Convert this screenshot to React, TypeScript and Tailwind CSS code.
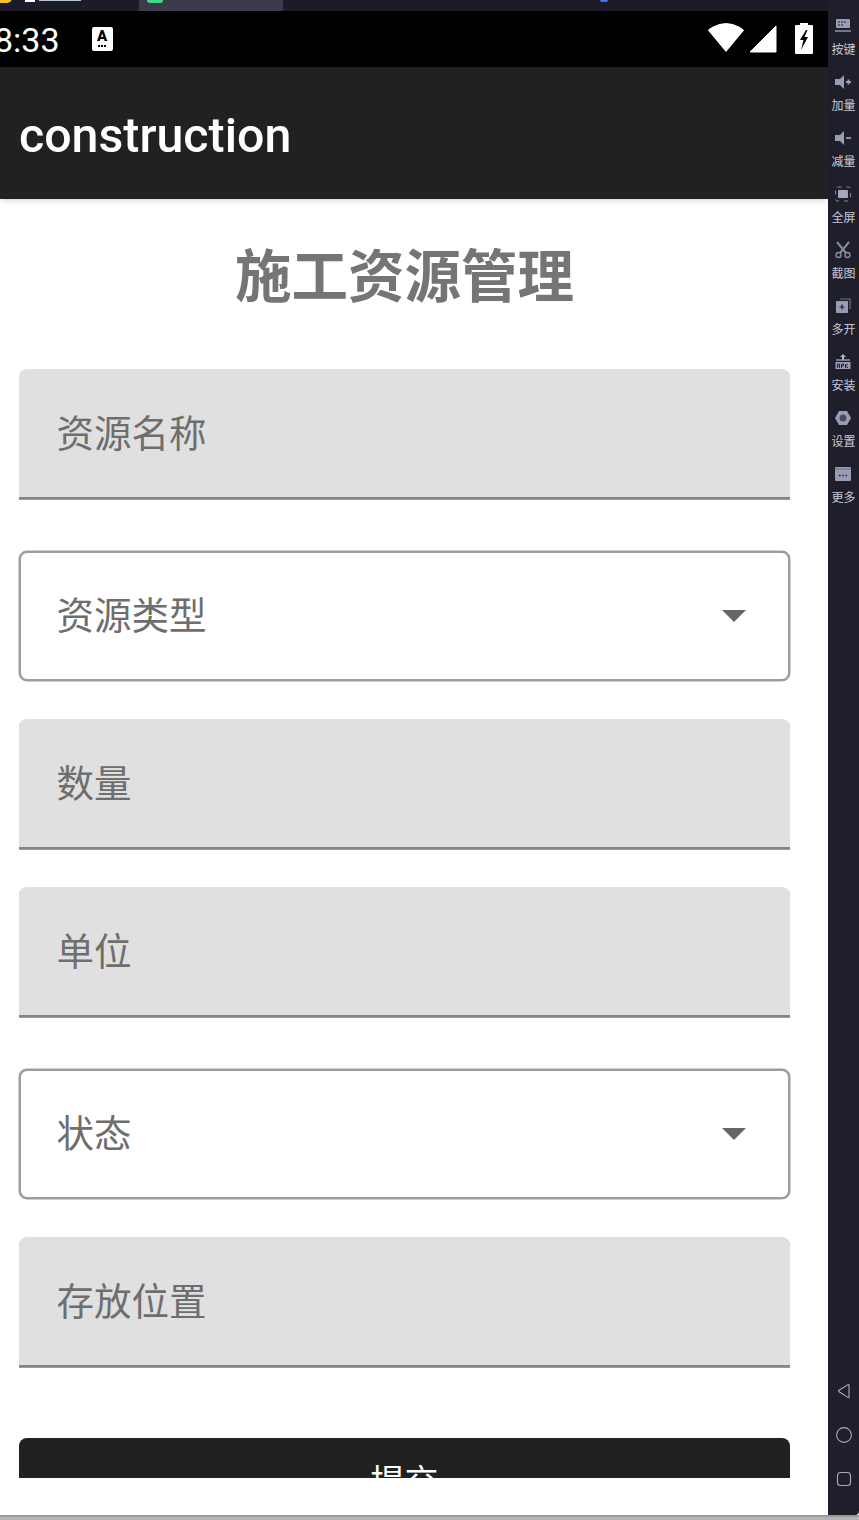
const cjk = "font-['Roboto','Noto_Sans_CJK_SC',sans-serif]"

function TextField({ label }: { label: string }) {
  return (
    <div className="flex h-[130px] items-center rounded-t-[8px] border-b-2 border-[#858585] bg-[#e0e0e0] pl-[37.5px] shadow-[0_1px_0_#9a9a9a]">
      <span className="mt-[4px] text-[37.5px] leading-none text-[#6e6e6e]">{label}</span>
    </div>
  )
}

function SelectField({ label }: { label: string }) {
  return (
    <div className="mt-[14px] flex h-[130px] items-center justify-between rounded-[8px] border-2 border-[#9e9e9e] bg-white pl-[35.5px] pr-[42px] ring-[0.5px] ring-[#9e9e9e]">
      <span className="mt-[2px] text-[37.5px] leading-none text-[#6e6e6e]">{label}</span>
      <div className="h-0 w-0 border-x-[12px] border-t-[12px] border-x-transparent border-t-[#666666]" />
    </div>
  )
}

function StatusBar() {
  return (
    <div className="flex h-[56px] items-center bg-black pr-[15px] text-white">
      <span className="-ml-[6px] mt-[1px] font-['Roboto',sans-serif] text-[34px] leading-none">8:33</span>
      <div className="ml-[32px] flex h-[24px] w-[21px] flex-col items-center rounded-[2px] bg-white text-black">
        <span className="font-['Roboto',sans-serif] text-[15px] font-black leading-[18px]">A</span>
        <div className="flex gap-[1px]">
          <i className="h-[2px] w-[2px] bg-black" />
          <i className="h-[2px] w-[2px] bg-black" />
          <i className="h-[2px] w-[2px] bg-black" />
        </div>
      </div>
      <div className="ml-auto flex items-center">
        <svg width="38" height="31" viewBox="0 0 36 30" className="-mt-[3px] -ml-[1px]">
          <path d="M18 29 L0.5 8 Q2 6 5 4.5 Q18 -2.5 31 4.5 Q34 6 35.5 8 Z" fill="#fff" />
        </svg>
        <svg width="28" height="28" viewBox="0 0 28 28" className="ml-[4px]">
          <path d="M27 1 V27 H1 Z" fill="#fff" stroke="#fff" strokeLinejoin="round" />
        </svg>
        <svg width="18" height="31" viewBox="0 0 18 31" className="ml-[18px] -mt-[1px]">
          <path d="M5 0 H13 V2 H17 Q18 2 18 3 V30 Q18 31 17 31 H1 Q0 31 0 30 V3 Q0 2 1 2 H5 Z" fill="#fff" />
          <path d="M11 7 L5 17 H8.5 L6 27 L13 14 H9.5 L12.5 7 Z" fill="#000" />
        </svg>
      </div>
    </div>
  )
}

const toolIcons = [
  <g key="k">
    <rect x="2" y="2" width="14" height="9" rx="1" fill="#9b9bb5" />
    <path d="M4 5h2M7 5h2M10 5h2M4 8h2M7 8h2" stroke="#1f1f2b" strokeWidth="1.2" />
    <path d="M1 14h16" stroke="#9b9bb5" strokeWidth="1.4" />
  </g>,
  <g key="p">
    <path d="M1 6h5l4-4v14l-4-4H1z" fill="#9b9bb5" />
    <path d="M12 9h5M14.5 6.5v5" stroke="#9b9bb5" strokeWidth="1.8" />
  </g>,
  <g key="m">
    <path d="M1 6h5l4-4v14l-4-4H1z" fill="#9b9bb5" />
    <path d="M12 9h5" stroke="#9b9bb5" strokeWidth="1.8" />
  </g>,
  <g key="f">
    <rect x="1.5" y="2" width="15" height="14" rx="2" fill="none" stroke="#8a8aa3" strokeDasharray="4 5" />
    <rect x="4" y="5" width="10" height="8" rx="1" fill="#a5a5bd" />
  </g>,
  <g key="c">
    <path d="M3 1l9 11M15 1L6 12" stroke="#8a8aa3" strokeWidth="2" />
    <circle cx="4.5" cy="14" r="2.5" fill="none" stroke="#8a8aa3" strokeWidth="1.4" />
    <circle cx="13.5" cy="14" r="2.5" fill="none" stroke="#8a8aa3" strokeWidth="1.4" />
  </g>,
  <g key="o">
    <path d="M6 2h10v10" fill="none" stroke="#6f6f88" strokeWidth="1.2" />
    <rect x="2" y="4" width="12" height="12" rx="1" fill="#9b9bb5" />
    <path d="M5.5 10h5M8 7.5v5" stroke="#1f1f2b" strokeWidth="1.2" />
  </g>,
  <g key="a">
    <path d="M9 1l3 3h-2v3H8V4H6z" fill="#b5b5c8" />
    <path d="M2 7h14" stroke="#9b9bb5" strokeWidth="1.4" />
    <rect x="1.5" y="9" width="15" height="7" fill="#9b9bb5" />
    <path d="M3.5 15v-4h2v4M3.5 13h2M7.5 15v-4h2v2h-2M11.5 15v-4M14 11l-2.5 2 2.5 2" fill="none" stroke="#1f1f2b" strokeWidth="0.9" />
  </g>,
  <g key="s">
    <path d="M5 2h8l4 7-4 7H5L1 9z" fill="#9b9bb5" />
    <circle cx="9" cy="9" r="3.5" fill="#4a4a5c" />
  </g>,
  <g key="d">
    <rect x="1" y="2" width="16" height="14" rx="1" fill="#9b9bb5" />
    <path d="M1 4h16" stroke="#6f6f88" />
    <path d="M5 10.5h1.5M8.3 10.5h1.5M11.6 10.5h1.5" stroke="#1f1f2b" strokeWidth="1.6" />
  </g>,
]

const tools = ['按键', '加量', '减量', '全屏', '截图', '多开', '安装', '设置', '更多']

function SideBar() {
  return (
    <aside className="-mt-[11px] flex w-[31px] flex-col items-center rounded-br-[4px] bg-[#1f1f2b] pb-[28px] pt-[11px]">
      {tools.map((name, i) => (
        <div key={name} className="flex h-[56px] flex-col items-center">
          <svg width="18" height="18" viewBox="0 0 18 18" className="mt-[6px]">{toolIcons[i]}</svg>
          <span className="mt-[7px] text-[12px] leading-[16px] whitespace-nowrap text-[#c9c9d6]">{name}</span>
        </div>
      ))}
      <div className="mt-auto flex flex-col items-center gap-[28px]">
        <svg width="16" height="16" viewBox="0 0 16 16" fill="none" stroke="#a9a9bd" strokeWidth="1.1">
          <path d="M13 2 V14 Q13 15 12 14.4 L3 8.8 Q2 8 3 7.2 L12 1.6 Q13 1 13 2 Z" />
        </svg>
        <svg width="16" height="16" viewBox="0 0 16 16" fill="none" stroke="#a9a9bd" strokeWidth="1.1">
          <circle cx="8" cy="8" r="7.4" />
        </svg>
        <svg width="16" height="16" viewBox="0 0 16 16" fill="none" stroke="#a9a9bd" strokeWidth="1.1">
          <rect x="1.5" y="1.5" width="13" height="13" rx="3" />
        </svg>
      </div>
    </aside>
  )
}

export default function App() {
  return (
    <div className={`flex h-[1520px] w-[859px] flex-col overflow-hidden bg-white ${cjk}`}>
      {/* emulator window tabs */}
      <div className="flex h-[11px] shrink-0 bg-[#1f1f2b]">
        <div className="flex w-[139px] items-start gap-[4px] overflow-hidden rounded-br-[6px] bg-[#1c1c28]">
          <div className="-mt-[7px] ml-[-4px] h-[10px] w-[16px] shrink-0 rounded-full bg-[#f5c518]" />
          <div className="ml-[9px] h-[2px] w-[10px] bg-white" />
          <div className="h-[1px] w-[42px] bg-[#b9c4dc]" />
        </div>
        <div className="w-[144px] bg-[#3b3b4b] pl-[8px]">
          <div className="h-[3px] w-[16px] rounded-b-[3px] bg-[#3ddc84]" />
        </div>
        <div className="flex-1 rounded-bl-[6px] bg-[#1c1c28] pl-[317px]">
          <div className="h-[2px] w-[8px] rounded-b-[2px] bg-[#4f6df5]" />
        </div>
      </div>

      <div className="flex h-[1504px] shrink-0">
        <main className="flex w-[828px] flex-col bg-white">
          <StatusBar />
          <header className="relative z-10 flex h-[132px] shrink-0 items-center bg-[#212121] pl-[19px] shadow-md">
            <h1 className="mt-[6px] font-['Roboto',sans-serif] text-[48.3px] font-medium leading-none text-white">construction</h1>
          </header>

          <div className="h-[1279px] overflow-hidden pl-[19px] pr-[38px]">
            <h2 className="flex h-[170px] items-start justify-center pt-[46px] text-[56.5px] font-bold leading-[66px] text-[#757575]">施工资源管理</h2>
            <div className="flex flex-col gap-[38px]">
              <TextField label="资源名称" />
              <SelectField label="资源类型" />
              <TextField label="数量" />
              <TextField label="单位" />
              <SelectField label="状态" />
              <TextField label="存放位置" />
            </div>
            <button className="mt-[71px] flex h-[88px] w-full items-center justify-center rounded-[8px] bg-[#212121] text-[34px] leading-none text-white">提交</button>
          </div>
        </main>
        <SideBar />
      </div>

      <div className="h-[5px] shrink-0 border-t-2 border-[#9a9a9a] bg-[#b4b4b4]" />
    </div>
  )
}
